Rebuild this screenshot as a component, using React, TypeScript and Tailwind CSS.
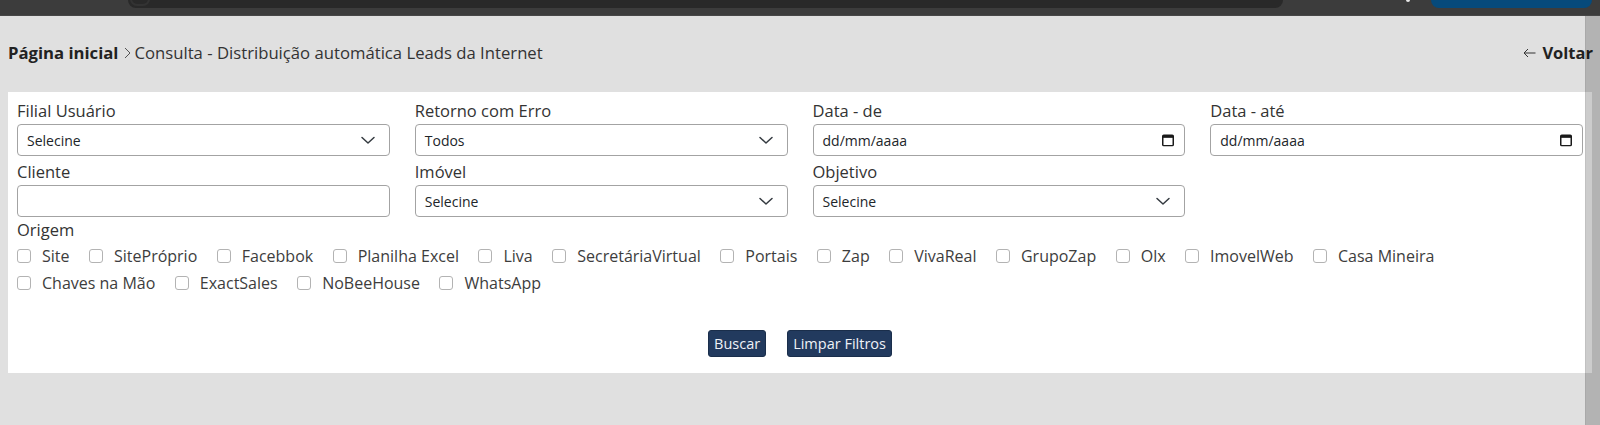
import React from "react";

const Chevron = () => (
  <svg width="16" height="16" viewBox="0 0 16 16" className="absolute right-[13px] top-1/2 -translate-y-1/2" fill="none">
    <path d="M2 5.5l6 5.5 6-5.5" stroke="#343a40" strokeWidth="1.5" strokeLinecap="round" strokeLinejoin="round" />
  </svg>
);

const Calendar = () => (
  <svg width="12" height="13" viewBox="0 0 12 13" className="absolute right-[10px] top-1/2 -translate-y-1/2" fill="none">
    <rect x="0.75" y="1.75" width="10.5" height="10.5" rx="1" stroke="#1a1a1a" strokeWidth="1.5" />
    <rect x="0.75" y="1.75" width="10.5" height="2.6" fill="#1a1a1a" />
  </svg>
);

function Field({ label, children }: { label?: string; children?: React.ReactNode }) {
  return (
    <div className="flex flex-col">
      <div className="h-[24px] leading-[24px] text-[16.5px] text-[#333] mb-[1px]">{label ?? "\u00a0"}</div>
      {children}
    </div>
  );
}

function Select({ value }: { value: string }) {
  return (
    <div className="relative h-[32px] border border-[#a3a3a3] rounded-[4px] bg-white flex items-center pl-[9px] text-[14px] text-[#212529]">
      {value}
      <Chevron />
    </div>
  );
}

function DateBox() {
  return (
    <div className="relative h-[32px] border border-[#a3a3a3] rounded-[4px] bg-white flex items-center pl-[9px] text-[14px] text-[#212529]">
      dd/mm/aaaa
      <Calendar />
    </div>
  );
}

function TextBox() {
  return <div className="h-[32px] border border-[#a3a3a3] rounded-[4px] bg-white" />;
}

function Check({ label }: { label: string }) {
  return (
    <div className="flex items-center gap-[11px] mr-[19.5px]">
      <span className="w-[14px] h-[14px] border border-[#b3b3b3] rounded-[3px] bg-white shrink-0" />
      <span className="text-[16px] text-[#3d3d3d] whitespace-nowrap">{label}</span>
    </div>
  );
}

const row1 = ["Site", "SitePróprio", "Facebbok", "Planilha Excel", "Liva", "SecretáriaVirtual", "Portais", "Zap", "VivaReal", "GrupoZap", "Olx", "ImovelWeb", "Casa Mineira"];
const row2 = ["Chaves na Mão", "ExactSales", "NoBeeHouse", "WhatsApp"];

export default function App() {
  return (
    <div className="relative min-h-screen bg-[#e0e0e0] font-['Open_Sans',sans-serif] overflow-hidden">
      {/* browser chrome strip */}
      <div className="h-[16px] bg-[#3c3c3c] border-b border-[#474747] flex items-start">
        <div className="w-[128px]" />
        <div className="w-[1155px] h-[8px] bg-[#292929] rounded-b-[10px] flex items-start">
          <div className="ml-[2px] -mt-[8px] w-[20px] h-[14px] rounded-full border-[2px] border-[#333]" />
        </div>
        <div className="w-[123px]" />
        <div className="w-[4px] h-[2px] bg-[#e8e8e8] rounded-b-full" />
        <div className="w-[21px]" />
        <div className="w-[161px] h-[8px] bg-[#064a7b] rounded-b-[10px]" />
      </div>

      {/* breadcrumb */}
      <div className="flex items-center justify-between pl-[8px] pr-[7px] mt-[25px] h-[24px]">
        <div className="flex items-center text-[16.7px] leading-[24px]">
          <span className="font-bold text-[#222]">Página inicial</span>
          <span className="ml-[6px] mr-[3px] text-[#555]">
            <svg width="7" height="12" viewBox="0 0 7 12" fill="none">
              <path d="M1 1l5 5-5 5" stroke="#555" strokeWidth="1" />
            </svg>
          </span>
          <span className="text-[#333]">Consulta - Distribuição automática Leads da Internet</span>
        </div>
        <div className="flex items-center text-[16.5px] leading-[24px]">
          <svg width="13" height="10" viewBox="0 0 13 10" fill="none" className="mr-[6px]">
            <path d="M12.5 5H1M5 1L1 5l4 4" stroke="#333" strokeWidth="1" />
          </svg>
          <span className="font-bold text-[#222]">Voltar</span>
        </div>
      </div>

      {/* panel */}
      <div className="mx-[8px] mt-[27px] bg-white px-[9px] pt-[7px] pb-[16px]">
        <div className="grid grid-cols-4 gap-x-[25px] gap-y-[4px]">
          <Field label="Filial Usuário"><Select value="Selecine" /></Field>
          <Field label="Retorno com Erro"><Select value="Todos" /></Field>
          <Field label="Data - de"><DateBox /></Field>
          <Field label="Data - até"><DateBox /></Field>
          <Field label="Cliente"><TextBox /></Field>
          <Field label="Imóvel"><Select value="Selecine" /></Field>
          <Field label="Objetivo"><Select value="Selecine" /></Field>
          <div />
        </div>

        <div className="mt-[1px] h-[24px] leading-[24px] text-[16.5px] text-[#333]">Origem</div>
        <div className="flex items-center h-[27px]">
          {row1.map((l) => <Check key={l} label={l} />)}
        </div>
        <div className="flex items-center h-[27px]">
          {row2.map((l) => <Check key={l} label={l} />)}
        </div>

        <div className="flex justify-center gap-[21px] mt-[34px]">
          <button className="bg-[#223a5e] border border-[#1a2e4b] text-[#eef2f8] text-[14.5px] leading-[21px] px-[5px] py-[2px] rounded-[3px]">Buscar</button>
          <button className="bg-[#223a5e] border border-[#1a2e4b] text-[#eef2f8] text-[14.5px] leading-[21px] px-[5px] py-[2px] rounded-[3px]">Limpar Filtros</button>
        </div>
      </div>

      {/* overlay scrollbar */}
      <div className="absolute right-0 top-[16px] bottom-0 w-[15px] bg-black/20 border-l border-black/5" />
    </div>
  );
}
